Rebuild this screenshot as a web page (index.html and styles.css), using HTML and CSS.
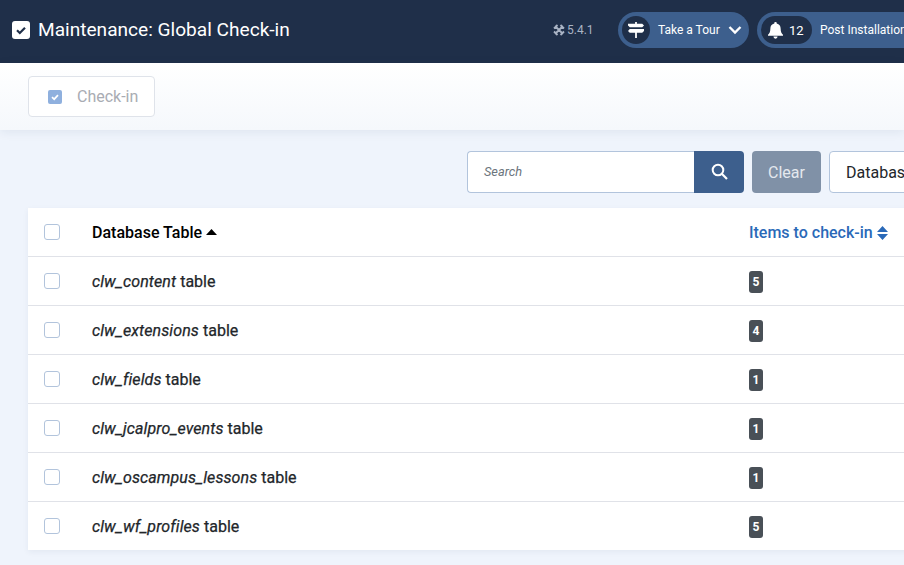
FILE: index.html
```html
<!DOCTYPE html>
<html lang="en">
<head>
<meta charset="utf-8">
<title>Maintenance: Global Check-in</title>
<link rel="stylesheet" href="styles.css">
</head>
<body>
<header class="topbar">
  <div class="brand">
    <svg class="brand-icon" width="18" height="18" viewBox="0 0 18 18"><rect width="18" height="18" rx="3" fill="#fff"/><path d="M5 9.3l2.8 2.7L13 6.8" fill="none" stroke="#1f2f49" stroke-width="2.2"/></svg>
    <h1 class="title">Maintenance: Global Check-in</h1>
  </div>
  <div class="status">
    <span class="version">
      <svg width="12" height="12" viewBox="0 0 12 12"><path d="M2 2l8 8M10 2l-8 8M1 4.5L4.5 1M7.5 1L11 4.5M11 7.5L7.5 11M4.5 11L1 7.5" fill="none" stroke="#a9b3c4" stroke-width="1.8"/></svg>
      5.4.1
    </span>
    <div class="pill tour">
      <span class="pill-icon round">
        <svg width="16" height="18" viewBox="0 0 18 20"><path d="M8 1h2v2h6l2 2-2 2H2L0 5V3h8zM2 9h16v2l-2 2H10v6H8v-6H2l-2-2z" fill="#fff"/></svg>
      </span>
      <span class="pill-text">Take a Tour</span>
      <svg class="chev" width="14" height="10" viewBox="0 0 14 10"><path d="M1.5 2l5.5 5.5L12.500 2" fill="none" stroke="#fff" stroke-width="2.400"/></svg>
    </div>
    <div class="pill post">
      <span class="pill-icon wide">
        <svg width="15" height="17" viewBox="0 0 16 18"><path d="M8 0a1.300 1.300 0 0 1 1.300 1.500C12 2 13.500 4.200 13.500 7c0 3.500 1 4.700 2.500 6.500V14.500H0V13.500C1.500 11.700 2.500 10.500 2.500 7c0-2.800 1.500-5 4.200-5.500A1.300 1.300 0 0 1 8 0zM5.800 15.500h4.400a2.200 2.200 0 0 1-4.400 0z" fill="#fff"/></svg>
        <span class="count">12</span>
      </span>
      <span class="pill-text">Post Installation Messages</span>
    </div>
  </div>
</header>

<div class="toolbar">
  <button class="check-btn" type="button">
    <svg width="14" height="14" viewBox="0 0 14 14"><rect width="14" height="14" rx="2" fill="#8fb0de"/><path d="M4 7.200l2.200 2L10 5.200" fill="none" stroke="#fff" stroke-width="1.700"/></svg>
    <span>Check-in</span>
  </button>
</div>

<main class="content">
  <div class="filters">
    <div class="search">
      <span class="search-input">Search</span>
      <span class="search-btn">
        <svg width="17" height="17" viewBox="0 0 17 17"><circle cx="7" cy="7" r="5.300" fill="none" stroke="#fff" stroke-width="2"/><path d="M10.800 10.800L16 16" stroke="#fff" stroke-width="2.200"/></svg>
      </span>
    </div>
    <span class="clear">Clear</span>
    <span class="select">Database Table ascending</span>
  </div>

  <table class="grid">
    <thead>
      <tr>
        <th class="c-check"><span class="box"></span></th>
        <th class="c-name">Database Table <svg class="asc" width="11" height="6" viewBox="0 0 11 6"><path d="M5.500 0L11 6H0z" fill="#000"/></svg></th>
        <th class="c-items"><span class="link">Items to check-in</span> <svg class="both" width="11" height="14" viewBox="0 0 11 14"><path d="M5.500 0L11 6H0zM5.500 14L0 8h11z" fill="#2a69b8"/></svg></th>
      </tr>
    </thead>
    <tbody>
      <tr><td class="c-check"><span class="box"></span></td><td class="c-name"><em>clw_content</em> table</td><td class="c-items"><span class="badge">5</span></td></tr>
      <tr><td class="c-check"><span class="box"></span></td><td class="c-name"><em>clw_extensions</em> table</td><td class="c-items"><span class="badge">4</span></td></tr>
      <tr><td class="c-check"><span class="box"></span></td><td class="c-name"><em>clw_fields</em> table</td><td class="c-items"><span class="badge">1</span></td></tr>
      <tr><td class="c-check"><span class="box"></span></td><td class="c-name"><em>clw_jcalpro_events</em> table</td><td class="c-items"><span class="badge">1</span></td></tr>
      <tr><td class="c-check"><span class="box"></span></td><td class="c-name"><em>clw_oscampus_lessons</em> table</td><td class="c-items"><span class="badge">1</span></td></tr>
      <tr><td class="c-check"><span class="box"></span></td><td class="c-name"><em>clw_wf_profiles</em> table</td><td class="c-items"><span class="badge">5</span></td></tr>
    </tbody>
  </table>
</main>
</body>
</html>
```
FILE: styles.css
```css
* { box-sizing: border-box; }
html, body { margin: 0; height: 100%; overflow: hidden; }
body {
  width: 904px;
  background: #eff4fc;
  font-family: Roboto, "Liberation Sans", sans-serif;
  font-size: 16px;
  color: #22262a;
}
.topbar {
  height: 63px;
  background: #1f2f49;
  display: flex;
  align-items: center;
  padding: 0 0 3px 12px;
  color: #fff;
  white-space: nowrap;
}
.brand { display: flex; align-items: center; gap: 8px; width: 541px; flex: none; }
.brand-icon { flex: none; }
.title { margin: 0; font-size: 19.1px; font-weight: 400; line-height: 24px; }
.status { display: flex; align-items: center; flex: none; font-size: 12px; }
.version { display: flex; align-items: center; gap: 2px; color: #a9b3c4; width: 65px; flex: none; }
.pill {
  height: 36px;
  border-radius: 18px;
  background: #3d5f8d;
  display: flex;
  align-items: center;
  padding-left: 4px;
  flex: none;
}
.tour { width: 131px; margin-right: 8px; }
.post { width: 300px; }
.pill-icon {
  height: 28px;
  background: #1f2f49;
  border-radius: 14px;
  display: flex;
  align-items: center;
  flex: none;
}
.round { width: 28px; justify-content: center; }
.wide { width: 51px; padding-left: 7px; gap: 6px; }
.count { font-size: 13px; }
.pill-text { margin-left: 8px; }
.chev { margin-left: 8px; }
.toolbar {
  height: 67px;
  padding: 13px 28px 0;
  background: linear-gradient(#fff, #f5f8fc);
  box-shadow: 0 2px 10px rgba(30, 50, 90, 0.08);
  position: relative;
}
.check-btn {
  width: 127px;
  height: 41px;
  display: flex;
  align-items: center;
  gap: 15px;
  padding: 0 0 0 19px;
  background: #fff;
  border: 1px solid #dfe3ea;
  border-radius: 4px;
  font: 16px Roboto, sans-serif;
  color: #a9acb3;
}
.content { padding: 21px 0 0 28px; }
.filters {
  display: flex;
  gap: 8px;
  padding-left: 439px;
  height: 42px;
  white-space: nowrap;
}
.search { display: flex; width: 277px; flex: none; }
.search-input {
  flex: 1;
  background: #fff;
  border: 1px solid #b2c4dc;
  border-right: 0;
  border-radius: 4px 0 0 4px;
  padding-left: 16px;
  font-size: 12.8px;
  font-style: italic;
  color: #6c757d;
  line-height: 40px;
}
.search-btn {
  width: 50px;
  background: #3d5f8d;
  border-radius: 0 4px 4px 0;
  display: flex;
  align-items: center;
  justify-content: center;
}
.search-btn svg { margin-top: -2px; }
.clear {
  width: 69px;
  flex: none;
  background: #8091a7;
  color: #e4e8ee;
  border-radius: 4px;
  text-align: center;
  line-height: 43px;
}
.select {
  flex: none;
  width: 240px;
  background: #fff;
  border: 1px solid #b2c4dc;
  border-radius: 4px;
  padding-left: 16px;
  line-height: 41px;
  color: #22262a;
}
.grid {
  margin-top: 15px;
  width: 1000px;
  background: #fff;
  border-collapse: collapse;
  box-shadow: 0 2px 6px rgba(30, 50, 90, 0.06);
}
.grid th, .grid td { padding: 0; text-align: left; border-bottom: 1px solid #e0e2e8; vertical-align: middle; }
.grid tbody tr:last-child td { border-bottom: 0; }
.grid thead tr { height: 48px; }
.grid tbody tr { height: 49px; }
.grid th { font-weight: 500; color: #000; }
.grid td.c-name { -webkit-text-stroke: 0.25px #22262a; }
.grid .c-name, .grid .c-items { padding-top: 1px; }
.c-check { width: 64px; padding-left: 16px !important; }
.c-name { width: 657px; }
.box {
  display: block;
  width: 16px;
  height: 16px;
  border: 1px solid #b2c4dc;
  border-radius: 3px;
  background: #fff;
}
.asc { margin-left: 0; vertical-align: 3px; }
.both { vertical-align: -2px; }
.link { color: #2a69b8; }
.grid em { font-weight: 400; font-style: italic; letter-spacing: 0.1px; }
.badge {
  display: inline-block;
  width: 14px;
  height: 22px;
  margin-top: 1px;
  background: #495057;
  color: #fff;
  border-radius: 3px;
  font-size: 12px;
  font-weight: 700;
  text-align: center;
  line-height: 22px;
  vertical-align: middle;
}
```
